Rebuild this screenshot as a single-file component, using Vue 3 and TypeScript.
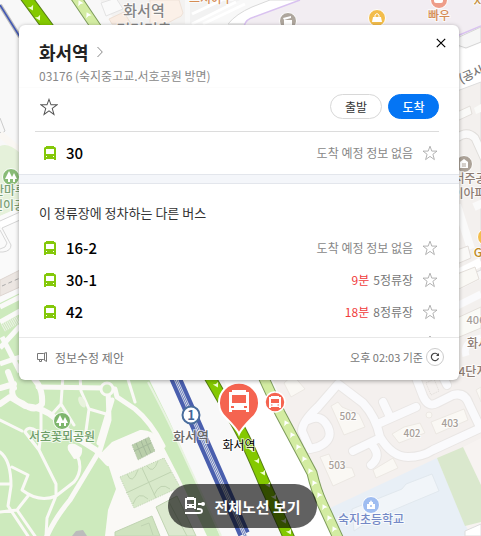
<script setup lang="ts">
import { ref } from 'vue'

interface Route {
  id: string
  minutes?: string
  stops?: string
}

const mainRoute: Route = { id: '30' }
const otherRoutes: Route[] = [
  { id: '16-2' },
  { id: '30-1', minutes: '9분', stops: '5정류장' },
  { id: '42', minutes: '18분', stops: '8정류장' },
]

const starPath = 'M8 1.2 L9.8 6.1 H15 L10.9 9.3 L12.4 14.6 L8 11.4 L3.6 14.6 L5.1 9.3 L1 6.1 H6.2 Z'
const busPath =
  'M2 0h8v1h1l1 1V14h-2v-1H2v1H0V2L1 1h1z M2 3v5h8V3z M2 10v1h1V10z M9 10v1h1V10z'

const saved = ref<string[]>([])
function toggle(id: string) {
  saved.value = saved.value.includes(id)
    ? saved.value.filter((s) => s !== id)
    : [...saved.value, id]
}

// Residential lanes, drawn twice: a wide edge below, the surface on top
const lanes =
  'M338 384L363 403Q376 417 380 437Q392 457 408 457Q422 457 433 450L485 426M380 423L416 407M383 402L390 417M353 451L380 438M372 445Q382 456 371 465M338 384L318 407Q302 422 302 431L308 445M308 420Q321 413 328 427Q334 440 318 447L310 449M415 375L423 396Q428 408 437 403L453 395Q465 392 469 404L480 427M442 375L447 385'
const rail = 'M174 375L207 450L247 540'
const southRoad = 'M25 -4L50 30M208 374L238 426Q248 444 263 480L290 540'
const northRoad = 'M75 -4L98 30M261 372L280 413L312 473Q316 490 322 503L339 540'

// Direction marks painted along the two carriageways
const southMarks = [
  [31, 7], [38, 17], [216, 384], [251, 448], [257, 460], [263, 472],
  [268, 484], [274, 496], [279, 508], [284, 520], [289, 531],
]
const northMarks = [
  [80, 3], [88, 15], [286, 423], [292, 435], [298, 447], [304, 459],
  [310, 471], [314, 483], [319, 495], [324, 507], [329, 518], [334, 529],
]
</script>

<template>
  <main class="stage">
    <svg class="map" viewBox="0 0 481 536" preserveAspectRatio="xMinYMin slice" aria-hidden="true">
      <rect width="481" height="536" fill="#f8f8f8" />

      <!-- top blocks -->
      <path d="M100 0H185V24H118Z" fill="#f3f2f1" />
      <path d="M101 3L116 -2L123 9L106 16Z" fill="#fafafa" stroke="#e3e3e3" />
      <path d="M109 19L124 12L131 24H112Z" fill="#f9ece2" stroke="#eddfd4" />
      <path d="M150 0H179L183 13Q182 17 177 18L166 24H150Z" fill="#fbf0e8" stroke="#efe2d8" />
      <path d="M190 0H240L190 24Z" fill="#f2f2f2" />
      <path d="M192 24L236 2M192 14L222 0M203 24L245 4" stroke="#fff" stroke-width="3" />
      <path d="M228 24Q236 14 252 7L270 0H300L246 24Z" fill="#fff" stroke="#d9d9d9" />
      <path d="M244 26Q246 19 254 17L300 0H481V26L459 35V40H244Z" fill="#f2edf2" />
      <path d="M244 26Q246 19 254 17L300 0M457 36L481 26" fill="none" stroke="#d9c2f0" stroke-width="1.5" />

      <!-- right-hand blocks -->
      <path d="M457 38L481 27V42L466 48L457 45Z" fill="#f6f6f6" stroke="#d5d5d5" />
      <path d="M457 48L466 49L481 43V83L457 92Z" fill="#fff" />
      <path d="M457 91L481 82V270L457 280Z" fill="#f3f0ee" stroke="#ddd" />
      <path d="M457 112L470 106L472 114L457 121Z" fill="#fafaf8" stroke="#e3dfdb" />
      <path d="M474 108L481 104V112L476 114Z" fill="#fafaf8" />
      <path d="M457 138Q467 130 475 138L485 160" fill="none" stroke="#e0ddda" stroke-width="9" />
      <path d="M457 138Q467 130 475 138L485 160" fill="none" stroke="#fafafa" stroke-width="7" />
      <path d="M457 205L471 249M474 207L483 203" stroke="#fafafa" stroke-width="8" />
      <path d="M457 250L468 246L471 258L457 264Z" fill="#faf9f7" stroke="#e2ddd9" />
      <path d="M457 274L481 262" stroke="#fff" stroke-width="9" />
      <path d="M457 274L475 267L479 279L457 290Z" fill="#faf9f5" stroke="#e4dfda" />
      <path d="M479 280L481 279V400H457V291Z" fill="#f3f0ee" />
      <path d="M457 306L481 294" stroke="#fafafc" stroke-width="7" />
      <path d="M457 318L481 307V318V328L457 338Z" fill="#fafaf6" stroke="#e4dfda" />
      <path d="M466 356Q462 342 481 338" fill="none" stroke="#fafafc" stroke-width="7" />

      <!-- left-hand blocks -->
      <path d="M0 118L5 131L0 135M0 132Q10 141 20 149" fill="none" stroke="#ccc" stroke-width="1" />
      <path d="M0 134L20 151" stroke="#faf7f3" stroke-width="7" />
      <path d="M0 146Q8 142 20 153V207L0 216Z" fill="#e5f1da" />
      <path d="M0 216L20 208V296L0 302Z" fill="#fafafa" />
      <path d="M0 225L20 216" stroke="#fff" stroke-width="7" />
      <path d="M0 221L20 212M2 228L20 220M2 228L11 245Q11 251 3 252H0M0 249L5 247L7 243L0 230" fill="none" stroke="#d6d6d6" />
      <path d="M0 280L20 270V287L0 296Z" fill="#ece6e2" stroke="#ddd5d0" />
      <path d="M2 286L20 278" stroke="#aaa" stroke-dasharray="4 3" />

      <!-- park -->
      <path d="M0 303L20 293V375H147L169 420L220 536H0Z" fill="#cdeabd" />
      <path d="M0 307L20 297M0 322L20 311M0 348L20 326M2 337L20 372M0 364L20 357" stroke="#fafaf8" stroke-width="5" />
      <path d="M3 328L19 319" stroke="#eef1e9" stroke-width="8" stroke-dasharray="1 1" />
      <path d="M112 442L140 430Q152 429 160 440L178 475L207 536H105L108 510L116 489L108 464L99 455Z" fill="#faf9f6" />
      <g fill="none" stroke="#faf9f6" stroke-linecap="round" stroke-linejoin="round">
        <path stroke-width="6" d="M8 372L14 388M0 388L14 384Q8 398 22 403Q35 413 42 404Q43 393 38 384L32 376M0 404L10 397L25 406Q42 407 55 418L72 435L96 450L108 463" />
        <path stroke-width="5" d="M38 387L105 388L115 389L117 397L135 409Q151 422 163 446M108 388L109 420L100 450L70 500Q55 518 47 536M112 400L99 443" />
        <path stroke-width="3" d="M63 375L61 404L53 413M61 404L74 425M80 376L81 391L89 409L106 414M89 409L85 438M127 376L135 402M41 404L41 432L39 450L25 432Q28 425 37 431M0 420L22 431M39 450L56 484L56 496M77 455Q84 470 74 482L56 496Q39 503 22 490L28 475L12 467M0 452Q11 460 11 486L8 506L28 536M56 496L47 518L46 536M0 484H10M0 512L17 510L35 536M17 510L28 496" />
      </g>
      <path d="M68 450Q66 442 75 444L82 448Q83 459 74 459Z" fill="#faf9f6" />
      <circle cx="107" cy="389" r="6" fill="#cdeabd" stroke="#faf9f6" stroke-width="3" />
      <ellipse cx="82" cy="402" rx="3" ry="6" transform="rotate(-28 82 402)" fill="#e8f2dd" />
      <path d="M72 536L76 531L83 530L87 536Z" fill="#bcbcbc" />

      <!-- sport courts -->
      <path d="M132 445L149 437L155 451L138 460Z" fill="#b9ceaa" stroke="#b4c6aa" stroke-dasharray="1 1" />
      <path d="M136 443L142 457M141 441L147 455M145 439L151 453M134 451L151 443" stroke="#a3b89a" />
      <g stroke="#c0d4b2" stroke-width="1">
        <path d="M120 477L164 458L180 487L134 508Z" fill="#d8e9ca" stroke-dasharray="1 1" />
        <path d="M142 468L156 498M126 493L171 472M127 474Q132 486 138 470M133 504Q138 490 148 499M147 466Q153 475 158 461M154 495Q160 481 170 489" fill="none" />
        <path d="M115 532L152 516L160 536H115Z" fill="#cfe3bf" />
        <path d="M156 507L177 496L196 536H169Z" fill="#dce9cf" />
        <path d="M141 526L149 523L153 535M169 502L187 536" fill="none" />
      </g>
      <path d="M148 382Q167 418 176 438L221 536" fill="none" stroke="#e9f4e1" stroke-width="2" />

      <!-- residential blocks -->
      <path d="M271 375H481V536H342L322 488L285 410Z" fill="#f4f0ee" />
      <path d="M222 375H264L305 465L337 536H292L265 475L242 428Z" fill="#fff" />
      <path d="M463 447L481 438V536H470L465 525Z" fill="#f7f3f1" />
      <g fill="none" stroke-linecap="round" stroke-linejoin="round">
        <path stroke="#e9e6e4" stroke-width="10" :d="lanes" />
        <path stroke="#fafafc" stroke-width="8" :d="lanes" />
      </g>
      <g fill="#faf8f4" stroke="#ece8e3">
        <path d="M331 406L338 402L342 407L359 414L365 427L344 435Z" />
        <path d="M392 434L404 427L420 423L425 433L399 443Z" />
        <path d="M431 422L464 409L468 420L436 434Z" />
        <path d="M320 457L329 454L334 466L352 468L355 476L333 486Z" />
        <path d="M373 470L393 458L398 468L376 478Z" />
        <path d="M284 383L293 375L305 389L291 397Z" />
        <path d="M476 390L481 387V402Z" />
      </g>
      <circle cx="429" cy="415" r="3" fill="#faf8f4" stroke="#ece8e3" />
      <path d="M426 383L434 379L439 391L431 395Z" fill="none" stroke="#e0dcd8" stroke-dasharray="1 1" />

      <!-- school -->
      <path d="M330 508L437 458L466 526L471 536H342Z" fill="#e8eff6" />
      <path d="M437 458L463 447L481 485V522L465 526Z" fill="#dae8cd" />
      <path d="M465 531L481 524V536H465Z" fill="#fff" stroke="#ddd" />
      <path d="M352 509L402 489L406 484L432 474L439 491L372 519L354 531Z" fill="#f1f5f9" stroke="#e1e8ee" />

      <!-- rail -->
      <path d="M0 5L20 37" stroke="#bbb" stroke-width="4" />
      <path d="M0 5L20 37" stroke="#4057b5" stroke-width="1.5" />
      <path d="M174 375L207 450L244 534" fill="none" stroke="#4a5fae" stroke-width="12" />
      <path :d="rail" fill="none" stroke="#ced5e4" stroke-width="4" />
      <path :d="rail" fill="none" stroke="#4a5fae" stroke-width="2" />
      <path :d="rail" fill="none" stroke="#e5e9f0" stroke-width="1" />

      <!-- carriageways -->
      <g fill="none">
        <path :d="southRoad" stroke="#557d16" stroke-width="12" />
        <path :d="southRoad" stroke="#84c900" stroke-width="10" />
        <path :d="northRoad" stroke="#7e9c5c" stroke-width="11" />
        <path :d="northRoad" stroke="#d3eca2" stroke-width="9" />
      </g>
      <path v-for="(m, i) in southMarks" :key="'s' + i" d="M-3 -1L0 0L3 -1L0 4Z" fill="#efffd0" :transform="`translate(${m[0]} ${m[1]}) rotate(-28)`" />
      <path v-for="(m, i) in northMarks" :key="'n' + i" d="M-3 2L0 1L3 2L0 -3Z" fill="#fff" :transform="`translate(${m[0]} ${m[1]}) rotate(-28)`" />

      <!-- place badges -->
      <g stroke="#fff" stroke-width="1">
        <circle cx="288" cy="21" r="8.5" fill="#aea69d" />
        <circle cx="377" cy="18" r="8.5" fill="#f3bd4c" />
        <circle cx="439" cy="0" r="8.5" fill="#ee9d89" />
        <circle cx="464" cy="164" r="8.5" fill="#aca298" />
        <circle cx="486" cy="237" r="8.5" fill="#f3bd4c" />
        <circle cx="11" cy="177" r="8.5" fill="#88bb76" />
        <circle cx="62" cy="421" r="8.5" fill="#7eb66d" />
        <circle cx="371" cy="505" r="8.5" fill="#9fbdf1" />
      </g>
      <path d="M284 20H292V26H284ZM283 18L291 16V18L284 20Z" fill="#fff" />
      <path d="M373 17H381L382 22H372Z" fill="#fff" />
      <path d="M375 17V15Q377 12 379 15V17" fill="none" stroke="#fff" />
      <rect x="434" y="-4" width="9" height="7" rx="2" fill="#fff" />
      <path d="M460 162L464 159L468 162V168H460Z" fill="#fff" />
      <path d="M462 164H466M462 166H466" stroke="#aca298" />
      <g fill="#fff">
        <path d="M9 171L5 179H8V182H10V179H13ZM14 173L11 179H13V182H15V179H17Z" />
        <path d="M60 415L56 423H59V426H61V423H64ZM65 417L62 423H64V426H66V423H68Z" />
        <path d="M367 504H369V502H370L371 500L372 502H373V504H375V509H367Z" />
      </g>
      <circle cx="371" cy="506" r="1" fill="#9fbdf1" />

      <!-- place names -->
      <g class="names">
        <text x="144" y="16" font-size="15" fill="#858585">화서역</text>
        <text x="144" y="35" font-size="15" fill="#858585">먹거리촌</text>
        <text x="211" y="3" font-size="12" fill="#d58d55">스시야우</text>
        <text x="439" y="20" font-size="12" fill="#d58d55">빠우</text>
        <text x="479" y="6" font-size="12" fill="#c58e3c">지</text>
        <text font-size="12" fill="#777" transform="translate(478 76) rotate(-24)">(공사구</text>
        <text x="15" y="195" font-size="12" fill="#7b9f75">산마루길</text>
        <text x="14" y="210" font-size="12" fill="#7b9f75">린이공원</text>
        <text x="470" y="183" font-size="12" fill="#8e7d74">서주공</text>
        <text x="469" y="198" font-size="12" fill="#8e7d74">이아파</text>
        <text x="478" y="257" font-size="12" fill="#be8a24">G</text>
        <text x="476" y="324" font-size="11" fill="#a69e99">406</text>
        <text x="478" y="348" font-size="12" fill="#8e7d74">화서</text>
        <text x="473" y="376" font-size="12" fill="#8e7d74">4단지</text>
        <text x="62" y="441" font-size="12" fill="#6e9e69">서호꽃뫼공원</text>
        <text x="348" y="420" font-size="10" fill="#a69e99">502</text>
        <text x="337" y="469" font-size="10" fill="#a69e99">503</text>
        <text x="412" y="437" font-size="10" fill="#a69e99">402</text>
        <text x="450" y="427" font-size="10" fill="#a69e99">403</text>
        <text x="371" y="524" font-size="12" fill="#7489c6">숙지초등학교</text>
        <text x="191" y="441" font-size="13" fill="#666">화서역</text>
        <text class="stop-name" x="239" y="450" font-size="12" fill="#000">화서역</text>
      </g>

      <!-- station and stop markers -->
      <circle cx="191" cy="415" r="8.5" fill="#fff" stroke="#496d9d" stroke-width="2" />
      <text class="line-no" x="191" y="420" font-size="13" fill="#45679a">1</text>
      <path d="M239 434Q237 429 226 418A20 20 0 1 1 252 418Q241 429 239 434Z" fill="#f56450" stroke="#fff" stroke-width="2" />
      <path fill="#fff" fill-rule="evenodd" d="M232 390H246V392H249V412H246V410H232V412H229V392H232ZM232 395V403H246V395ZM231 406V408H234V406ZM244 406V408H247V406Z" />
      <circle cx="275" cy="402" r="10" fill="#f56450" stroke="#fff" stroke-width="1.5" />
      <path fill="#fff" fill-rule="evenodd" d="M271 396H279V397H281V408H279V407H271V408H269V397H271ZM271 399V403H279V399ZM271 404.500V405.500H272.500V404.500ZM277.500 404.500V405.500H279V404.500Z" />
    </svg>

    <section class="card">
      <header class="head">
        <h1><a href="#stop">화서역
          <svg class="chevron" viewBox="0 0 6 12"><path d="M.5 1L5.300 6L.5 11" fill="none" stroke="#888" /></svg></a></h1>
        <p>03176 (숙지중고교.서호공원 방면)</p>
        <button class="close" type="button" aria-label="닫기">
          <svg viewBox="0 0 10 10"><path d="M.8 .8L9.200 9.200M9.200 .8L.8 9.200" stroke="#000" stroke-width="1.200" /></svg>
        </button>
      </header>

      <div class="actions">
        <button class="star big" type="button" aria-label="즐겨찾기" @click="toggle('stop')">
          <svg viewBox="0 0 16 16"><path :d="starPath" :fill="saved.includes('stop') ? '#f5c32c' : 'none'" stroke="#555" stroke-width=".9" /></svg>
        </button>
        <button class="pill" type="button">출발</button>
        <button class="pill primary" type="button">도착</button>
      </div>

      <div class="route main-route">
        <svg class="bus" viewBox="0 0 12 14"><path :d="busPath" fill="#84c80a" fill-rule="evenodd" /></svg>
        <a class="number" href="#route">{{ mainRoute.id }}</a>
        <span class="none">도착 예정 정보 없음</span>
        <button class="star" type="button" aria-label="즐겨찾기" @click="toggle(mainRoute.id)">
          <svg viewBox="0 0 16 16"><path :d="starPath" :fill="saved.includes(mainRoute.id) ? '#f5c32c' : 'none'" stroke="#aaa" stroke-width=".9" /></svg>
        </button>
      </div>

      <div class="band"></div>

      <h2>이 정류장에 정차하는 다른 버스</h2>
      <ul class="routes">
        <li v-for="r in otherRoutes" :key="r.id" class="route">
          <svg class="bus" viewBox="0 0 12 14"><path :d="busPath" fill="#84c80a" fill-rule="evenodd" /></svg>
          <a class="number" href="#route">{{ r.id }}</a>
          <span v-if="r.minutes" class="arrival"><em>{{ r.minutes }}</em>{{ r.stops }}</span>
          <span v-else class="none">도착 예정 정보 없음</span>
          <button class="star" type="button" aria-label="즐겨찾기" @click="toggle(r.id)">
            <svg viewBox="0 0 16 16"><path :d="starPath" :fill="saved.includes(r.id) ? '#f5c32c' : 'none'" stroke="#aaa" stroke-width=".9" /></svg>
          </button>
        </li>
        <li class="route next">
          <svg class="star" viewBox="0 0 16 16"><path :d="starPath" fill="none" stroke="#999" /></svg>
        </li>
      </ul>

      <footer class="foot">
        <a class="suggest" href="#suggest">
          <svg viewBox="0 0 12 12"><path d="M1.500 2.500H7.500L10.500 1.500V10.500L7.500 8.500H1.500ZM8.500 2V9M3.500 9V10.500H5.500V9" fill="none" stroke="#777" /></svg>
          정보수정 제안
        </a>
        <span class="time">오후 02:03 기준</span>
        <button class="refresh" type="button" aria-label="새로고침">
          <svg viewBox="0 0 10 10"><path d="M8.200 3A3.700 3.700 0 1 0 8.500 6.300" fill="none" stroke="#444" stroke-width="1.200" /><path d="M9 1V4H6Z" fill="#444" /></svg>
        </button>
      </footer>
    </section>

    <button class="all-routes" type="button">
      <svg viewBox="0 0 22 20">
        <path fill="#fff" fill-rule="evenodd" d="M3 1H10V2H12V13H10V12H3V13H1V2H3ZM3 4V8H10V4ZM3 9V10H5V9ZM8 9V10H10V9Z" />
        <path d="M14 8H19M1 17H15Q18 17 18 15Q18 13 15 13H13" fill="none" stroke="#fff" stroke-width="1.800" />
        <circle cx="19" cy="8" r="2" fill="#fff" />
      </svg>
      전체노선 보기
    </button>
  </main>
</template>

<style>
body {
  margin: 0;
}
</style>

<style scoped>
.stage {
  position: relative;
  display: flex;
  flex-direction: column;
  box-sizing: border-box;
  min-height: 100vh;
  padding: 25px 22px 8px 19px;
  overflow: hidden;
  font-family: "Noto Sans CJK KR", "Noto Sans", sans-serif;
  font-size: 12px;
}
.map {
  position: absolute;
  inset: 0;
  width: 100%;
  height: 100%;
}
.names text {
  text-anchor: middle;
  font-weight: 500;
  paint-order: stroke;
  stroke: #fff;
  stroke-width: 2px;
  stroke-opacity: 0.7;
}
.names .stop-name {
  font-weight: 400;
}
.line-no {
  text-anchor: middle;
  font-weight: 700;
}
button {
  padding: 0;
  border: 0;
  background: none;
  font: inherit;
  cursor: pointer;
}
a {
  color: inherit;
  text-decoration: none;
}
svg {
  display: block;
}
.card {
  position: relative;
  background: #fff;
  border-radius: 6px;
  box-shadow: 0 1px 4px rgba(0, 0, 0, 0.35);
}
.head {
  padding: 14px 20px 0;
  border-bottom: 1px solid #fcfcfc;
}
h1 {
  margin: 0;
  font-size: 18px;
  font-weight: 700;
  line-height: 26px;
  color: #222;
}
h1 a {
  display: flex;
  align-items: center;
  gap: 8px;
}
.chevron {
  width: 6px;
  height: 12px;
}
.head p {
  margin: 0;
  line-height: 22px;
  color: #888;
}
.close {
  position: absolute;
  top: 8px;
  right: 8px;
  display: grid;
  place-items: center;
  width: 20px;
  height: 20px;
}
.close svg {
  width: 10px;
  height: 10px;
}
.actions {
  display: flex;
  align-items: center;
  gap: 6px;
  margin: 0 20px 0 16px;
  padding: 6px 0 12px 5px;
  border-bottom: 1px solid #dcdcdc;
}
.star {
  flex: none;
  width: 16px;
  height: 16px;
}
.big {
  width: 18px;
  height: 18px;
  margin-right: auto;
}
.pill {
  box-sizing: border-box;
  width: 52px;
  height: 25px;
  border: 1px solid #d8d8d8;
  border-radius: 13px;
  line-height: 22px;
  color: #333;
}
.primary {
  width: 51px;
  border-color: #0475f4;
  background: #0475f4;
  font-weight: 500;
  color: #fff;
}
.route {
  display: flex;
  align-items: center;
  height: 32px;
  padding: 0 21px 0 25px;
}
.main-route {
  height: 42px;
}
.bus {
  width: 12px;
  height: 14px;
}
.number {
  margin: 0 auto 0 10px;
  font-size: 15px;
  font-weight: 500;
  line-height: 24px;
  color: #000;
}
.none,
.arrival {
  margin-right: 9px;
  line-height: 20px;
  color: #888;
}
.arrival {
  color: #777;
}
em {
  margin-right: 4px;
  font-style: normal;
  color: #f03c3c;
}
.band {
  height: 8px;
  border: solid #e3e6ec;
  border-width: 1px 0;
  background: #f4f6fa;
}
h2 {
  margin: 19px 20px 9px;
  font-size: 13px;
  font-weight: 400;
  line-height: 20px;
  color: #333;
}
.routes {
  margin: 0;
  padding: 0;
  list-style: none;
}
.next {
  box-sizing: border-box;
  align-items: flex-start;
  justify-content: flex-end;
  height: 9px;
  padding-top: 7px;
  overflow: hidden;
}
.foot {
  display: flex;
  align-items: center;
  height: 38px;
  padding: 0 15px 4px 17px;
  border-top: 1px solid #e8e8e8;
  color: #777;
}
.suggest {
  display: flex;
  align-items: center;
  gap: 7px;
  margin-right: auto;
}
.suggest svg {
  width: 12px;
  height: 12px;
}
.time {
  margin-right: 3px;
  font-size: 11px;
}
.refresh {
  display: grid;
  place-items: center;
  box-sizing: border-box;
  width: 18px;
  height: 18px;
  border: 1px solid #ccc;
  border-radius: 50%;
}
.refresh svg {
  width: 10px;
  height: 10px;
}
.all-routes {
  position: relative;
  display: flex;
  align-items: center;
  gap: 8px;
  align-self: center;
  height: 44px;
  margin: auto 0 0 7px;
  padding: 0 16px;
  border-radius: 22px;
  background: rgba(0, 0, 0, 0.62);
  font-size: 15px;
  font-weight: 700;
  color: #fff;
}
.all-routes svg {
  width: 22px;
  height: 20px;
}
</style>
